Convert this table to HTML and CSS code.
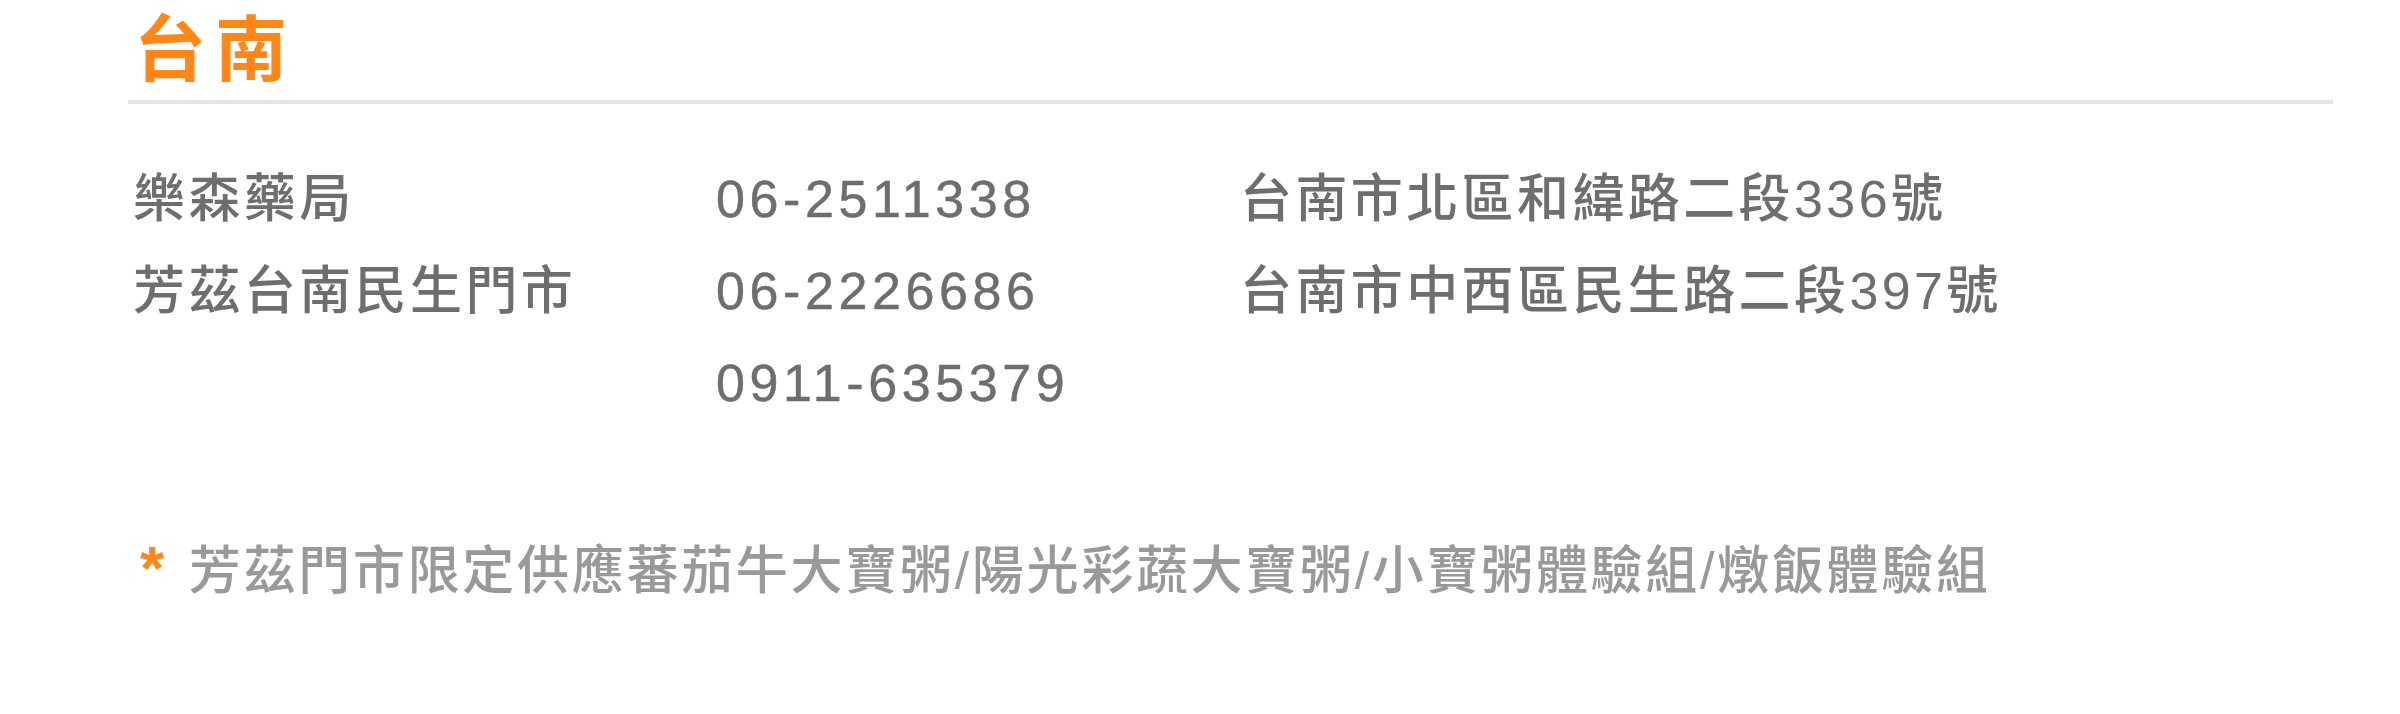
FILE: index.html
```html
<!DOCTYPE html>
<html lang="zh-Hant">
<head>
<meta charset="utf-8">
<title>台南</title>
<link rel="stylesheet" href="styles.css">
</head>
<body>
<section class="region">
  <h2 class="region-title">台南</h2>
  <div class="store-list">
    <div class="store">
      <div class="store-name">樂森藥局</div>
      <div class="store-phones"><div>06-2511338</div></div>
      <div class="store-address">台南市北區和緯路二段336號</div>
    </div>
    <div class="store">
      <div class="store-name">芳茲台南民生門市</div>
      <div class="store-phones"><div>06-2226686</div><div>0911-635379</div></div>
      <div class="store-address">台南市中西區民生路二段397號</div>
    </div>
  </div>
  <p class="note"><span class="note-mark">*</span>芳茲門市限定供應蕃茄牛大寶粥/陽光彩蔬大寶粥/小寶粥體驗組/燉飯體驗組</p>
</section>
</body>
</html>
```
FILE: styles.css
```css
html, body {
  margin: 0;
  padding: 0;
  background: #ffffff;
}

body {
  font-family: "Liberation Sans", "Noto Sans CJK TC", sans-serif;
}

.region {
  margin: 0 67px 0 128px;
}

.region-title {
  margin: 0;
  padding-left: 6px;
  font-size: 72px;
  line-height: 100px;
  font-weight: 700;
  letter-spacing: 9px;
  color: #ff8617;
  border-bottom: 4px solid #e6e6e6;
}

.store-list {
  margin-top: 49px;
  padding-left: 5px;
  color: #6e6e6e;
  font-size: 52px;
  font-weight: 500;
  line-height: 92px;
  letter-spacing: 3.4px;
}

.store {
  display: grid;
  grid-template-columns: 583px 524px 1fr;
}

.store-phones {
  letter-spacing: 4.6px;
  -webkit-text-stroke: 0.5px #6e6e6e;
}

.note {
  margin: 93px 0 0;
  padding-left: 10px;
  font-size: 52px;
  font-weight: 500;
  line-height: 92px;
  letter-spacing: 2.7px;
  color: #999999;
}

.note-mark {
  display: inline-block;
  color: #ff8617;
  font-size: 62px;
  font-weight: 700;
  margin-left: 2px;
  margin-right: 22px;
}
```
